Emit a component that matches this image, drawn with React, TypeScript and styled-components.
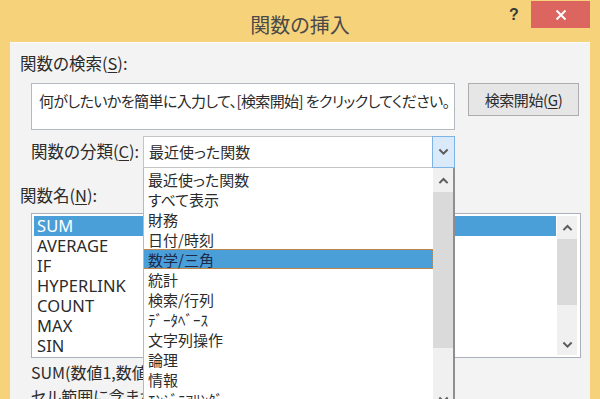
import * as React from 'react'
import styled, { createGlobalStyle } from 'styled-components'

const GlobalStyle = createGlobalStyle`
  html, body {
    margin: 0;
    padding: 0;
    background: #f6d37b;
  }
  body {
    font-family: "Noto Sans CJK JP", "Noto Sans", sans-serif;
    font-feature-settings: "palt";
    color: #2b2b2b;
  }
`

const Dialog = styled.div`
  width: 600px;
  height: 399px;
  overflow: hidden;
  display: flex;
  flex-direction: column;
  background: #f6d37b;
`

const TitleBar = styled.div`
  height: 42px;
  flex: none;
  display: grid;
  grid-template-columns: 1fr auto 1fr;
  align-items: start;
`

const Title = styled.div`
  grid-column: 2;
  font-size: 20px;
  line-height: 20px;
  padding-top: 15px;
  color: #4a4a4a;
`

const TitleButtons = styled.div`
  grid-column: 3;
  justify-self: end;
  display: flex;
  align-items: flex-start;
  padding-right: 10px;
`

const HelpButton = styled.div`
  width: 34px;
  height: 28px;
  font-family: "Liberation Sans", sans-serif;
  font-weight: bold;
  font-size: 16px;
  line-height: 30px;
  text-align: center;
  color: #3a3a3a;
`

const CloseButton = styled.div`
  width: 59px;
  height: 27px;
  margin-top: 1px;
  background: #dc6560;
  display: flex;
  align-items: center;
  justify-content: center;
`

const Panel = styled.div`
  flex: 1;
  margin: 0 10px;
  background: #f3f3f3;
  border-top: 1px solid #fafafa;
  padding: 10px 0 0 10px;
  font-size: 16.5px;
`

const Label = styled.div<{ $gap?: number }>`
  height: 20px;
  line-height: 20px;
  margin-top: ${p => p.$gap ?? 0}px;
  white-space: nowrap;
`

const U = styled.span`
  text-decoration: underline;
  text-underline-offset: 2px;
`

const SearchRow = styled.div`
  display: flex;
  align-items: flex-start;
  gap: 13px;
  margin: 10px 0 0 11px;
  font-size: 15px;
`

const SearchBox = styled.div`
  box-sizing: border-box;
  width: 424px;
  height: 47px;
  background: #fff;
  border: 1px solid #b4b8bf;
  padding: 7px 0 0 7px;
  line-height: 20px;
  white-space: nowrap;
  letter-spacing: -0.6px;
`

const PushButton = styled.div`
  box-sizing: border-box;
  width: 111px;
  height: 33px;
  background: #e6e6e6;
  border: 1px solid #adadad;
  line-height: 31px;
  text-align: center;
  letter-spacing: -0.4px;
`

const CategoryRow = styled.div`
  display: flex;
  align-items: center;
  margin: 6px 0 0 11px;
  position: relative;
  z-index: 2;
`

const CategoryLabel = styled(Label)`
  width: 112px;
  margin-top: -2px;
`

const Select = styled.div`
  position: relative;
  box-sizing: border-box;
  width: 312px;
  height: 32px;
  background: #fff;
  border: 1px solid #c4c4c4;
  border-right: none;
  display: flex;
  font-size: 15px;
`

const SelectValue = styled.div`
  flex: 1;
  padding-left: 5px;
  line-height: 29px;
`

const SelectButton = styled.div`
  box-sizing: border-box;
  width: 23px;
  height: 32px;
  margin-top: -1px;
  background: #dbeafa;
  border: 1px solid #7fb3e6;
  display: flex;
  align-items: center;
  justify-content: center;
`

const DropList = styled.div`
  position: absolute;
  top: 31px;
  left: -1px;
  width: 312px;
  height: 270px;
  box-sizing: border-box;
  background: #fff;
  border-left: 1px solid #b9b9b9;
  border-right: 2px solid #8f8f8f;
  display: flex;
`

const DropItems = styled.div`
  width: 289px;
  padding-top: 1px;
`

const DropItem = styled.div<{ $selected?: boolean }>`
  box-sizing: border-box;
  height: 20px;
  line-height: 19px;
  padding-left: 4px;
  white-space: nowrap;
  background: ${p => (p.$selected ? '#4b9fd8' : 'transparent')};
  border: 1px dotted ${p => (p.$selected ? '#c4884a' : 'transparent')};
  border-left: none;
  color: ${p => (p.$selected ? '#1e2a48' : '#2b2b2b')};
`

const ScrollBar = styled.div<{ $thumbTop: number; $thumbHeight: number }>`
  position: relative;
  width: 20px;
  flex: none;
  background: #f0f0f0;
  &::after {
    content: '';
    position: absolute;
    left: 0;
    right: 0;
    top: ${p => p.$thumbTop}px;
    height: ${p => p.$thumbHeight}px;
    background: #dadada;
  }
`

const Arrow = styled.div<{ $top: number }>`
  position: absolute;
  left: 0;
  right: 0;
  top: ${p => p.$top}px;
  display: flex;
  justify-content: center;
`

const FunctionBox = styled.div`
  box-sizing: border-box;
  width: 550px;
  height: 145px;
  margin: 8px 0 0 11px;
  background: #fff;
  border: 1px solid #a9b0bb;
  padding: 2px 3px 2px 2px;
  display: flex;
  gap: 1px;
`

const FunctionRows = styled.div`
  flex: 1;
`

const FunctionRow = styled.div<{ $selected?: boolean }>`
  height: 20px;
  line-height: 20px;
  padding-left: 3px;
  font-family: "Noto Sans", "Open Sans", sans-serif;
  font-size: 16.5px;
  letter-spacing: 0.1px;
  background: ${p => (p.$selected ? '#4b9fd8' : 'transparent')};
  color: ${p => (p.$selected ? '#ffffff' : '#2b2b2b')};
`

const Description = styled.div`
  margin: 2px 0 0 11px;
  font-size: 16px;
  line-height: 24px;
  white-space: nowrap;
`

const Chevron = ({ up, size = 12 }: { up?: boolean; size?: number }) => (
  <svg width={size} height={size * 0.7} viewBox="0 0 12 8">
    <polyline
      points={up ? '1.5,6.5 6,2 10.5,6.5' : '1.5,1.5 6,6 10.5,1.5'}
      fill="none"
      stroke="#5c5c5c"
      strokeWidth="2.2"
    />
  </svg>
)

const categories = [
  '最近使った関数',
  'すべて表示',
  '財務',
  '日付/時刻',
  '数学/三角',
  '統計',
  '検索/行列',
  'ﾃﾞｰﾀﾍﾞｰｽ',
  '文字列操作',
  '論理',
  '情報',
  'ｴﾝｼﾞﾆｱﾘﾝｸﾞ',
  'キューブ',
]

const functions = ['SUM', 'AVERAGE', 'IF', 'HYPERLINK', 'COUNT', 'MAX', 'SIN']

export default function App() {
  return (
    <Dialog>
      <GlobalStyle />
      <TitleBar>
        <Title>関数の挿入</Title>
        <TitleButtons>
          <HelpButton>?</HelpButton>
          <CloseButton>
            <svg width="12" height="12" viewBox="0 0 12 12">
              <path d="M1.5 1.5 L10.5 10.5 M10.5 1.5 L1.5 10.5" stroke="#fff" strokeWidth="2" />
            </svg>
          </CloseButton>
        </TitleButtons>
      </TitleBar>
      <Panel>
        <Label>
          関数の検索(<U>S</U>):
        </Label>
        <SearchRow>
          <SearchBox>何がしたいかを簡単に入力して、[検索開始] をクリックしてください。</SearchBox>
          <PushButton>
            検索開始(<U>G</U>)
          </PushButton>
        </SearchRow>
        <CategoryRow>
          <CategoryLabel>
            関数の分類(<U>C</U>):
          </CategoryLabel>
          <Select>
            <SelectValue>最近使った関数</SelectValue>
            <SelectButton>
              <Chevron size={11} />
            </SelectButton>
            <DropList>
              <DropItems>
                {categories.map(c => (
                  <DropItem key={c} $selected={c === '数学/三角'}>
                    {c}
                  </DropItem>
                ))}
              </DropItems>
              <ScrollBar $thumbTop={24} $thumbHeight={156}>
                <Arrow $top={9}>
                  <Chevron up size={11} />
                </Arrow>
                <Arrow $top={228}>
                  <Chevron size={11} />
                </Arrow>
              </ScrollBar>
            </DropList>
          </Select>
        </CategoryRow>
        <Label $gap={17}>
          関数名(<U>N</U>):
        </Label>
        <FunctionBox>
          <FunctionRows>
            {functions.map(f => (
              <FunctionRow key={f} $selected={f === 'SUM'}>
                {f}
              </FunctionRow>
            ))}
          </FunctionRows>
          <ScrollBar $thumbTop={23} $thumbHeight={66}>
            <Arrow $top={8}>
              <Chevron up size={11} />
            </Arrow>
            <Arrow $top={125}>
              <Chevron size={11} />
            </Arrow>
          </ScrollBar>
        </FunctionBox>
        <Description>
          SUM(数値1,数値2,...)
          <br />
          セル範囲に含まれる数値をすべて合計します。
        </Description>
      </Panel>
    </Dialog>
  )
}
